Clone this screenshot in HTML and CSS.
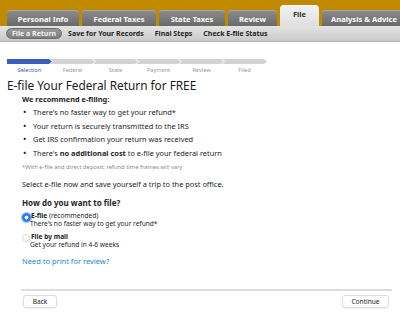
FILE: index.html
```html
<!DOCTYPE html>
<html>
<head>
<meta charset="utf-8">
<link rel="stylesheet" href="styles.css">
</head>
<body>
<div class="topbar">
  <div class="tab w-personal">Personal Info</div>
  <div class="tab w-federal">Federal Taxes</div>
  <div class="tab w-state">State Taxes</div>
  <div class="tab w-review">Review</div>
  <div class="tab tab-active w-file">File</div>
  <div class="tab w-analysis">Analysis &amp; Advice</div>
</div>
<div class="subnav">
  <span class="pill">File a Return</span>
  <span class="subitem">Save for Your Records</span>
  <span class="subitem">Final Steps</span>
  <span class="subitem">Check E-file Status</span>
</div>
<div class="progress">
  <div class="step step-done first"><div class="seg"></div><div class="label">Selection</div></div>
  <div class="step"><div class="seg"></div><div class="label">Federal</div></div>
  <div class="step"><div class="seg"></div><div class="label">State</div></div>
  <div class="step"><div class="seg"></div><div class="label">Payment</div></div>
  <div class="step"><div class="seg"></div><div class="label">Review</div></div>
  <div class="step"><div class="seg"></div><div class="label">Filed</div></div>
</div>
<h1 class="title">E-file Your Federal Return for FREE</h1>
<div class="content">
  <div class="subhead">We recommend e-filing:</div>
  <ul class="bullets">
    <li>There's no faster way to get your refund*</li>
    <li>Your return is securely transmitted to the IRS</li>
    <li>Get IRS confirmation your return was received</li>
    <li>There's <b>no additional cost</b> to e-file your federal return</li>
  </ul>
  <div class="footnote">*With e-file and direct deposit; refund time frames will vary</div>
  <p class="select">Select e-file now and save yourself a trip to the post office.</p>
  <div class="question">How do you want to file?</div>
  <div class="option">
    <span class="radio radio-on"></span>
    <div class="opt-text">
      <div class="opt-title"><b>E-file</b> (recommended)</div>
      <div class="opt-desc">There's no faster way to get your refund*</div>
    </div>
  </div>
  <div class="option">
    <span class="radio"></span>
    <div class="opt-text">
      <div class="opt-title"><b>File by mail</b></div>
      <div class="opt-desc">Get your refund in 4-6 weeks</div>
    </div>
  </div>
  <a class="link" href="#">Need to print for review?</a>
</div>
<div class="footer">
  <button class="btn btn-back">Back</button>
  <button class="btn btn-continue">Continue</button>
</div>
</body>
</html>
```
FILE: styles.css
```css
* { box-sizing: border-box; }
body {
  margin: 0;
  width: 400px;
  height: 327px;
  overflow: hidden;
  background: #fff;
  font-family: "Noto Sans", "DejaVu Sans", sans-serif;
  color: #1e1e1e;
  font-size: 7.4px;
}
.topbar {
  height: 26px;
  background: #bf8a00;
  display: flex;
  align-items: flex-end;
  padding-left: 7px;
  gap: 3px;
}
.tab {
  height: 16px;
  border-radius: 4px 4px 0 0;
  background: linear-gradient(#8a8a8a, #6a6a6a);
  border-top: 1px solid #a8a8a8;
  color: #fff;
  font-weight: bold;
  font-size: 7.6px;
  display: flex;
  align-items: center;
  justify-content: center;
  flex: none;
}
.w-personal { width: 72px; }
.w-federal { width: 74px; }
.w-state { width: 66px; }
.w-review { width: 49px; }
.w-file { width: 39px; }
.w-analysis { width: 84px; }
.tab-active {
  height: 21px;
  background: linear-gradient(#f2f2f2, #dedede);
  border-top: 1px solid #fff;
  color: #333;
  align-items: flex-start;
  padding-top: 3px;
}
.subnav {
  height: 16px;
  background: linear-gradient(#e4e4e4, #c9c9c9);
  border-bottom: 1px solid #b5b5b5;
  display: flex;
  align-items: center;
  padding-left: 6px;
  gap: 11px;
  font-weight: bold;
  font-size: 7px;
  color: #222;
}
.pill {
  background: linear-gradient(#9a9a9a, #7e7e7e);
  border: 1px solid #6a6a6a;
  color: #f2f2f2;
  border-radius: 6px;
  padding: 0 5px;
  height: 11px;
  line-height: 9px;
  margin-right: -5px;
}
.progress {
  display: flex;
  padding: 17px 0 0 7px;
}
.step {
  width: 45px;
  margin-right: -2px;
  display: flex;
  flex-direction: column;
  align-items: center;
}
.seg {
  width: 45px;
  height: 5px;
  background: #d3d3d3;
  clip-path: polygon(0 0, 42px 0, 45px 50%, 42px 100%, 0 100%, 3px 50%);
}
.first .seg { clip-path: polygon(0 0, 42px 0, 45px 50%, 42px 100%, 0 100%); }
.step-done .seg { background: #3a5cbd; }
.label {
  font-size: 5.6px;
  color: #9a9a9a;
  margin-top: 2px;
}
.step-done .label { color: #3a5cbd; }
.title {
  margin: 3px 0 0 7px;
  font-size: 11.8px;
  font-weight: normal;
  color: #1a1a1a;
}
.content {
  padding-left: 22px;
}
.subhead {
  font-weight: bold;
  margin-top: 1px;
}
.bullets {
  list-style: none;
  margin: 0;
  padding: 0;
}
.bullets li {
  position: relative;
  padding-left: 11px;
  margin-top: 3.4px;
  line-height: 10px;
}
.bullets li::before {
  content: "•";
  position: absolute;
  left: 1px;
  top: 0;
  font-size: 9px;
}
.footnote {
  color: #8a8a8a;
  font-size: 5.8px;
  margin-top: 5px;
}
.select { margin: 8px 0 0; }
.question {
  font-weight: bold;
  font-size: 8px;
  margin-top: 8px;
}
.option {
  display: flex;
  align-items: flex-start;
  margin-top: 4px;
}
.option + .option { margin-top: 5px; }
.radio {
  width: 8px;
  height: 8px;
  border-radius: 50%;
  border: 1px solid #dadada;
  background: #fcfcfc;
  flex: none;
  margin: 1px 1px 0 0;
}
.radio-on {
  width: 9px;
  height: 9px;
  margin-right: 0;
  border: none;
  background: radial-gradient(circle, #fff 0 1.6px, #2a7ef0 2.2px);
  box-shadow: 0 0 0 1px #9cc4f4;
}
.opt-text { font-size: 6.6px; line-height: 8px; }
.opt-desc { margin-left: -1px; }
.link {
  display: block;
  margin-top: 7.5px;
  color: #1b87d6;
  text-decoration: none;
  font-size: 7.5px;
}
.footer {
  margin: 22.5px 8px 0 21px;
  border-top: 2px solid #dcdcdc;
  display: flex;
  justify-content: space-between;
  padding: 4px 3px 0 2px;
}
.btn {
  font-family: inherit;
  font-size: 6.6px;
  color: #222;
  background: #fff;
  border: 1px solid #dedede;
  border-radius: 3px;
  height: 13px;
  padding: 0;
  box-shadow: 0 1px 1px rgba(0,0,0,0.05);
}
.btn-back { width: 34px; }
.btn-continue { width: 47px; }
```
